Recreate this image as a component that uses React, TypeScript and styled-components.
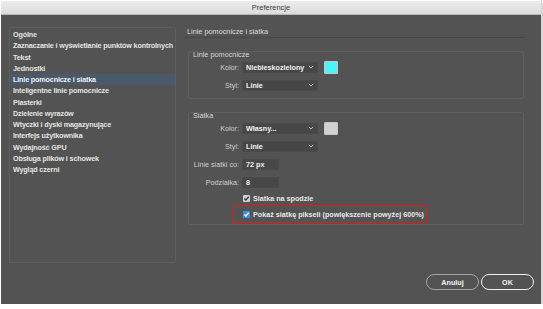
import React from "react";
import styled, { createGlobalStyle, css } from "styled-components";

const GlobalStyle = createGlobalStyle`
  html, body {
    margin: 0;
    padding: 0;
    background: #ffffff;
  }
  body {
    font-family: "Liberation Sans", Arial, sans-serif;
    -webkit-font-smoothing: antialiased;
  }
`;

const categories = [
  "Ogólne",
  "Zaznaczanie i wyświetlanie punktów kontrolnych",
  "Tekst",
  "Jednostki",
  "Linie pomocnicze i siatka",
  "Inteligentne linie pomocnicze",
  "Plasterki",
  "Dzielenie wyrazów",
  "Wtyczki i dyski magazynujące",
  "Interfejs użytkownika",
  "Wydajność GPU",
  "Obsługa plików i schowek",
  "Wygląd czerni",
];

function Chevron() {
  return (
    <svg width="6" height="4" viewBox="0 0 6 4">
      <path d="M0.8 0.8 L3 3 L5.2 0.8" fill="none" stroke="#bdbdbd" strokeWidth="1" />
    </svg>
  );
}

function Check({ color }: { color: string }) {
  return (
    <svg width="7" height="7" viewBox="0 0 7 7">
      <path d="M1.4 3.6 L2.9 5 L5.7 1.8" fill="none" stroke={color} strokeWidth="1.3" />
    </svg>
  );
}

function App() {
  return (
    <>
      <GlobalStyle />
      <Window>
        <TitleBar>Preferencje</TitleBar>
        <Body>
          <Main>
            <CategoryList>
              {categories.map((item) => (
                <Category key={item} active={item === "Linie pomocnicze i siatka"}>
                  {item}
                </Category>
              ))}
            </CategoryList>
            <Settings>
              <Heading>Linie pomocnicze i siatka</Heading>
              <Group bottom={4}>
                <GroupTitle>Linie pomocnicze</GroupTitle>
                <Row>
                  <Label>Kolor:</Label>
                  <Select>
                    <span>Niebieskozielony</span>
                    <Chevron />
                  </Select>
                  <Swatch color="#4cf3fb" />
                </Row>
                <Row>
                  <Label>Styl:</Label>
                  <Select>
                    <span>Linie</span>
                    <Chevron />
                  </Select>
                </Row>
              </Group>
              <Group bottom={1}>
                <GroupTitle>Siatka</GroupTitle>
                <Row>
                  <Label>Kolor:</Label>
                  <Select>
                    <span>Własny...</span>
                    <Chevron />
                  </Select>
                  <Swatch color="#d2d2d2" />
                </Row>
                <Row>
                  <Label>Styl:</Label>
                  <Select>
                    <span>Linie</span>
                    <Chevron />
                  </Select>
                </Row>
                <Row>
                  <Label>Linie siatki co:</Label>
                  <Input>72 px</Input>
                </Row>
                <Row>
                  <Label>Podziałka:</Label>
                  <Input>8</Input>
                </Row>
                <CheckRow>
                  <CheckBox>
                    <Check color="#3a3a3a" />
                  </CheckBox>
                  <CheckLabel>Siatka na spodzie</CheckLabel>
                </CheckRow>
                <Highlight>
                  <CheckBox checked>
                    <Check color="#ffffff" />
                  </CheckBox>
                  <CheckLabel>Pokaż siatkę pikseli (powiększenie powyżej 600%)</CheckLabel>
                </Highlight>
              </Group>
            </Settings>
          </Main>
          <Footer>
            <Button>Anuluj</Button>
            <Button primary>OK</Button>
          </Footer>
        </Body>
      </Window>
    </>
  );
}

export default App;

const Window = styled.div`
  width: 540px;
  height: 304px;
  margin-left: 1px;
  display: flex;
  flex-direction: column;
  border-right: 1px solid #d8d8d8;
  box-shadow: 2px 3px 0 #d6d6d6;
`;

const TitleBar = styled.div`
  height: 13px;
  border-top: 1px solid #ffffff;
  background: linear-gradient(#ececec, #dcdcdc);
  border-bottom: 1px solid #b8b8b8;
  display: flex;
  align-items: center;
  justify-content: center;
  font-size: 7.5px;
  color: #3a3a3a;
`;

const Body = styled.div`
  flex: 1;
  background: #535353;
  display: flex;
  flex-direction: column;
`;

const Main = styled.div`
  display: flex;
  gap: 9px;
  padding: 12px 16px 0 8px;
  height: 236px;
`;

const CategoryList = styled.div`
  width: 165px;
  border: 1px solid #5e5e5e;
  border-radius: 2px;
  padding: 1px 0 0;
  display: flex;
  flex-direction: column;
`;

const Category = styled.div<{ active?: boolean }>`
  height: 11.25px;
  line-height: 11.25px;
  padding-left: 3px;
  font-size: 7.2px;
  font-weight: 700;
  color: #e4e4e4;
  white-space: nowrap;
  letter-spacing: -0.15px;
  ${(p) =>
    p.active &&
    css`
      background: #4a596c;
      color: #f0f0f0;
    `}
`;

const Settings = styled.div`
  flex: 1;
  display: flex;
  flex-direction: column;
  gap: 13px;
`;

const Heading = styled.div`
  height: 10px;
  line-height: 10px;
  padding-left: 2px;
  border-bottom: 1px solid #474747;
  font-size: 7.3px;
  color: #dcdcdc;
`;

const Group = styled.div<{ bottom: number }>`
  margin: 0 1px 0 3px;
  border: 1px solid #5e5e5e;
  border-radius: 2px;
  padding: 0 0 ${(p) => p.bottom}px 4px;
  display: flex;
  flex-direction: column;
`;

const GroupTitle = styled.div`
  height: 6px;
  line-height: 6px;
  font-size: 7.3px;
  color: #d8d8d8;
`;

const Row = styled.div`
  display: flex;
  align-items: center;
  height: 18px;
`;

const Label = styled.div`
  width: 46px;
  display: flex;
  justify-content: flex-end;
  white-space: nowrap;
  font-size: 7.2px;
  color: #cfcfcf;
  margin-right: 3px;
`;

const Select = styled.div`
  width: 76px;
  height: 11px;
  box-sizing: border-box;
  background: #474747;
  border: 1px solid #4a4a4a;
  border-radius: 1px;
  display: flex;
  align-items: center;
  justify-content: space-between;
  padding: 0 3px 0 3px;
  font-size: 7.2px;
  font-weight: 700;
  color: #f2f2f2;
`;

const Input = styled(Select)`
  width: 37px;
`;

const Swatch = styled.div<{ color: string }>`
  width: 14px;
  height: 13px;
  box-sizing: border-box;
  margin-left: 6px;
  border: 1.5px solid #c6c6c6;
  border-radius: 1px;
  background: ${(p) => p.color};
`;

const CheckRow = styled.div`
  display: flex;
  align-items: center;
  gap: 3px;
  height: 14px;
  padding-left: 50px;
`;

const Highlight = styled(CheckRow)`
  height: 18px;
  box-sizing: border-box;
  width: 194px;
  margin-left: 40px;
  padding-left: 9px;
  border: 1px solid #e01b1b;
`;

const CheckBox = styled.div<{ checked?: boolean }>`
  width: 7px;
  height: 7px;
  border-radius: 1px;
  display: flex;
  align-items: center;
  justify-content: center;
  background: ${(p) => (p.checked ? "#3c8fe6" : "#cfcfcf")};
`;

const CheckLabel = styled.span`
  font-size: 7.2px;
  font-weight: 700;
  color: #e8e8e8;
  white-space: nowrap;
`;

const Footer = styled.div`
  display: flex;
  justify-content: flex-end;
  gap: 2px;
  padding: 11px 7px 0 0;
`;

const Button = styled.div<{ primary?: boolean }>`
  width: 53px;
  height: 16px;
  box-sizing: border-box;
  border-radius: 8px;
  border: 1.5px solid ${(p) => (p.primary ? "#f2f2f2" : "#a4a4a4")};
  display: flex;
  align-items: center;
  justify-content: center;
  font-size: 7.2px;
  font-weight: 700;
  color: #f4f4f4;
`;
